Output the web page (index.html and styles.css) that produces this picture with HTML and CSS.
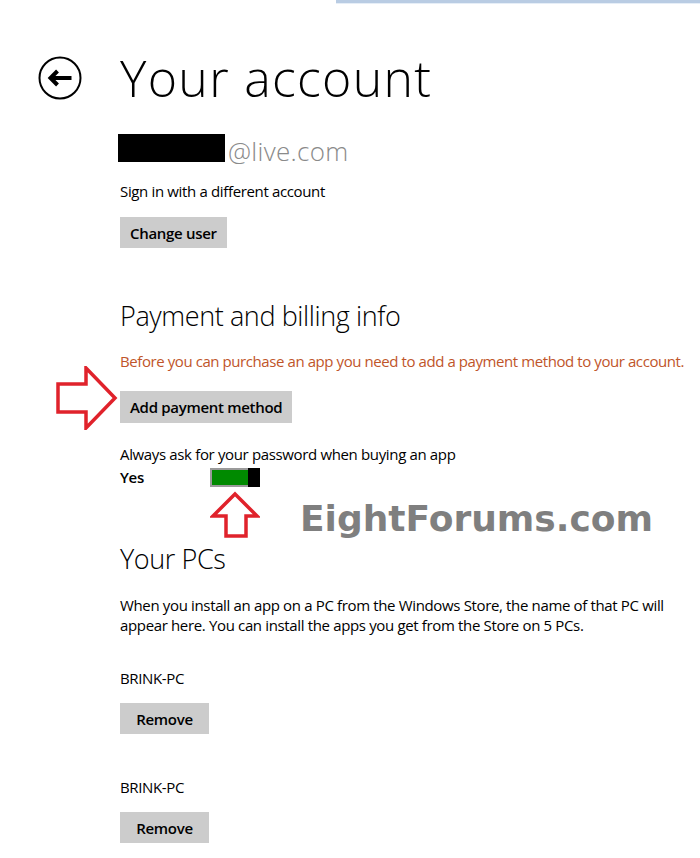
FILE: index.html
```html
<!DOCTYPE html>
<html lang="en">
<head>
    <meta charset="UTF-8">
    <meta name="viewport" content="width=device-width, initial-scale=1.0">
    <title>Your account</title>
    <link rel="stylesheet" href="styles.css">
</head>
<body>
    <div class="topbar"></div>

    <div class="page">
        <header class="page-header">
            <a class="back" href="#" aria-label="Back">
                <svg width="44" height="44" viewBox="0 0 44 44">
                    <circle cx="22" cy="22" r="20.5" fill="none" stroke="#000" stroke-width="2"/>
                    <path d="M33.5 22 H14" fill="none" stroke="#000" stroke-width="4"/>
                    <path d="M19.5 15 L12.5 22 L19.5 29" fill="none" stroke="#000" stroke-width="4"/>
                </svg>
            </a>
            <h1>Your account</h1>
        </header>

        <div class="content">
            <section class="account">
                <div class="email">
                    <span class="redacted"></span>
                    <span class="domain">@live.com</span>
                </div>
                <p class="text sign-in">Sign in with a different account</p>
                <button class="btn change-user">Change user</button>
            </section>

            <section class="billing">
                <h2>Payment and billing info</h2>
                <p class="text notice">Before you can purchase an app you need to add a payment method to your account.</p>
                <button class="btn add-payment">Add payment method</button>
                <p class="text ask">Always ask for your password when buying an app</p>
                <div class="toggle-row">
                    <span class="toggle-label">Yes</span>
                    <span class="toggle">
                        <span class="toggle-fill"></span>
                        <span class="toggle-thumb"></span>
                    </span>
                </div>
            </section>

            <section class="pcs">
                <h2>Your PCs</h2>
                <p class="text pcs-info">When you install an app on a PC from the Windows Store, the name of that PC will appear here. You can install the apps you get from the Store on 5 PCs.</p>

                <div class="pc">
                    <p class="text pc-name">BRINK-PC</p>
                    <button class="btn remove">Remove</button>
                </div>
                <div class="pc">
                    <p class="text pc-name">BRINK-PC</p>
                    <button class="btn remove">Remove</button>
                </div>
            </section>
        </div>
    </div>

    <!-- annotations laid over the screenshot -->
    <svg class="arrow arrow-right" width="64" height="64" viewBox="0 0 64 64">
        <polygon points="3,18 31,18 31,2 60,32 31,62 31,46 3,46" fill="#fff" stroke="#e0222b" stroke-width="3.5" stroke-linejoin="miter"/>
    </svg>
    <svg class="arrow arrow-up" width="50" height="48" viewBox="0 0 50 48">
        <polygon points="25,3 47,25 36,25 36,45 16,45 16,25 3,25" fill="#fff" stroke="#e0222b" stroke-width="3.5" stroke-linejoin="miter"/>
    </svg>
    <div class="watermark">EightForums.com</div>
</body>
</html>
```

FILE: styles.css
```css
body {
    margin: 0;
    position: relative;
    background: #fff;
    color: #000;
    font-family: "Open Sans", "Noto Sans", sans-serif;
}
.topbar {
    margin-left: 336px;
    height: 3px;
    background: #b9cce3;
    border-bottom: 1px solid #e6eef7;
}
.page {
    padding-left: 38px;
}
.page-header {
    display: flex;
    align-items: center;
    gap: 38px;
    margin-top: 44px;
}
.back {
    display: block;
    width: 44px;
    height: 44px;
}
.back svg {
    display: block;
}
h1 {
    margin: 0;
    font-size: 50px;
    font-weight: 300;
    line-height: 60px;
    letter-spacing: 1.3px;
}
.content {
    margin-left: 82px;
}
.text {
    margin: 0;
    font-size: 15px;
    line-height: 20px;
    letter-spacing: -0.35px;
}
.email {
    display: flex;
    align-items: flex-end;
    margin-top: 26px;
}
.redacted {
    display: block;
    width: 107px;
    height: 28px;
    margin-left: -2px;
    background: #000;
}
.domain {
    margin-left: 3px;
    font-size: 26px;
    font-weight: 300;
    line-height: 22px;
    color: #8a8a8a;
    letter-spacing: 0.3px;
}
.sign-in {
    margin-top: 19px;
}
.btn {
    display: block;
    height: 31px;
    padding: 0 10px;
    border: none;
    background: #cccccc;
    color: #000;
    font-family: inherit;
    font-size: 15px;
    font-weight: 600;
    letter-spacing: -0.3px;
    cursor: pointer;
}
.change-user {
    margin-top: 16px;
}
h2 {
    margin: 0;
    font-size: 27px;
    font-weight: 300;
    line-height: 36px;
    letter-spacing: -0.4px;
}
.billing h2 {
    margin-top: 50px;
}
.notice {
    margin-top: 17px;
    color: #c0552a;
    letter-spacing: -0.42px;
}
.add-payment {
    margin-top: 20px;
    height: 32px;
}
.ask {
    margin-top: 21px;
}
.toggle-row {
    display: flex;
    align-items: center;
    height: 20px;
    margin-top: 3px;
}
.toggle-label {
    width: 90px;
    font-size: 15px;
    font-weight: 600;
    letter-spacing: -0.3px;
}
.toggle {
    display: flex;
    width: 50px;
    height: 19px;
    margin-top: 1px;
}
.toggle-fill {
    flex: 1;
    border: 2px solid #9a9a9a;
    border-right: none;
    background: #008a00;
}
.toggle-thumb {
    width: 12px;
    background: #000;
}
.pcs h2 {
    margin-top: 54px;
}
.pcs-info {
    margin-top: 18px;
    max-width: 575px;
}
.pc-name {
    margin-top: 33px;
}
.pc + .pc .pc-name {
    margin-top: 43px;
}
.remove {
    margin-top: 15px;
    width: 89px;
}
.arrow {
    position: absolute;
}
.arrow-right {
    left: 55px;
    top: 366px;
}
.arrow-up {
    left: 210px;
    top: 491px;
}
.watermark {
    position: absolute;
    left: 300px;
    top: 499px;
    font-family: "DejaVu Sans", sans-serif;
    font-size: 36px;
    font-weight: bold;
    line-height: 40px;
    color: #7f7f7f;
}
```
